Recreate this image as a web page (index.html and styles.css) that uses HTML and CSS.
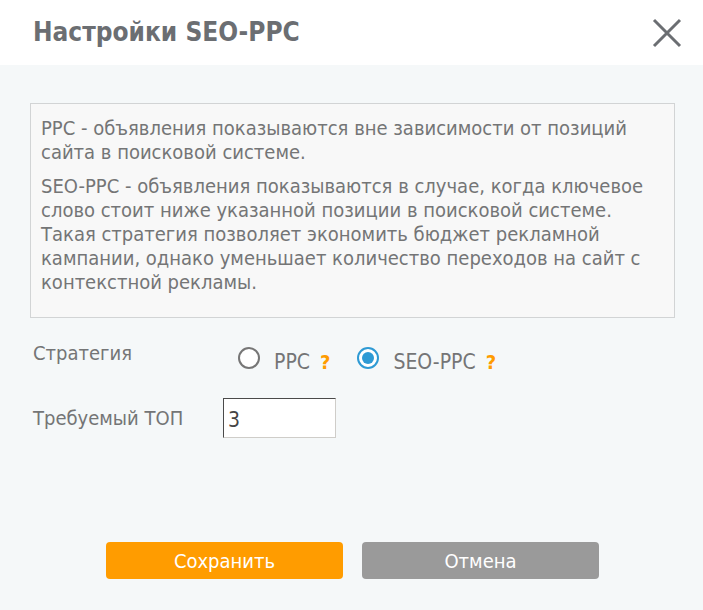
FILE: index.html
```html
<!DOCTYPE html>
<html lang="ru">
<head>
    <meta charset="UTF-8">
    <meta name="viewport" content="width=device-width, initial-scale=1.0">
    <title>Настройки SEO-PPC</title>
    <link rel="stylesheet" href="styles.css">
</head>
<body>
    <div class="dialog">
        <div class="dialog-header">
            <h2 class="dialog-title">Настройки SEO-PPC</h2>
            <button class="close-btn" title="Закрыть">
                <svg width="32" height="32" viewBox="0 0 32 32">
                    <path d="M3 3 L29 29 M29 3 L3 29" stroke="#6b6e72" stroke-width="3" fill="none"/>
                </svg>
            </button>
        </div>
        <div class="dialog-body">
            <div class="hint-box">
                <p>PPC - объявления показываются вне зависимости от позиций сайта в поисковой системе.</p>
                <p>SEO-PPC - объявления показываются в случае, когда ключевое слово стоит ниже указанной позиции в поисковой системе. Такая стратегия позволяет экономить бюджет рекламной кампании, однако уменьшает количество переходов на сайт с контекстной рекламы.</p>
            </div>

            <div class="form-row strategy-row">
                <span class="form-label">Стратегия</span>
                <div class="radio-group">
                    <label class="radio">
                        <input type="radio" name="strategy" value="ppc">
                        <span class="radio-mark"></span>
                        PPC
                    </label>
                    <span class="help">?</span>
                    <label class="radio">
                        <input type="radio" name="strategy" value="seo-ppc" checked>
                        <span class="radio-mark"></span>
                        SEO-PPC
                    </label>
                    <span class="help">?</span>
                </div>
            </div>

            <div class="form-row top-row">
                <label class="form-label" for="top">Требуемый ТОП</label>
                <input class="top-input" type="text" id="top" value="3">
            </div>

            <div class="actions">
                <button class="btn btn-save">Сохранить</button>
                <button class="btn btn-cancel">Отмена</button>
            </div>
        </div>
    </div>
</body>
</html>
```

FILE: styles.css
```css
html, body {
    margin: 0;
    height: 100%;
}
body {
    font-family: "DejaVu Sans Condensed", "DejaVu Sans", sans-serif;
    color: #747576;
    background-color: #f5f8f9;
}
.dialog {
    height: 100%;
    display: flex;
    flex-direction: column;
}
.dialog-header {
    height: 65px;
    background-color: #fff;
    display: flex;
    align-items: center;
    justify-content: space-between;
    padding: 0 20px 0 33px;
}
.dialog-title {
    margin: 0 0 2px;
    font-size: 26px;
    font-weight: bold;
    color: #6b6e72;
}
.close-btn {
    border: none;
    background: none;
    padding: 0;
    width: 32px;
    height: 32px;
    cursor: pointer;
}
.dialog-body {
    flex: 1;
    padding: 38px 28px 0 30px;
}
.hint-box {
    border: 1px solid #d2d4d5;
    background-color: #f8f8f8;
    padding: 12px 10px 13px;
    font-size: 20px;
    line-height: 24px;
}
.hint-box p {
    margin: 0 0 10px;
}
.form-row {
    display: flex;
    padding-left: 3px;
    margin-top: 24px;
}
.strategy-row {
    align-items: flex-start;
    margin-top: 23px;
}
.form-label {
    width: 190px;
    font-size: 20px;
    line-height: 24px;
}
.radio-group {
    display: flex;
    align-items: center;
    margin: 9px 0 0 15px;
    line-height: 24px;
}
.radio {
    display: flex;
    align-items: center;
    font-size: 21px;
    cursor: pointer;
}
.radio input {
    display: none;
}
.radio-mark {
    width: 22px;
    height: 22px;
    box-sizing: border-box;
    border: 2px solid #767676;
    border-radius: 50%;
    background-color: #fff;
    margin: -8px 14px 0 0;
    position: relative;
}
.radio input:checked + .radio-mark {
    border-color: #2e9ad4;
}
.radio input:checked + .radio-mark::after {
    content: "";
    position: absolute;
    left: 3px;
    top: 3px;
    width: 12px;
    height: 12px;
    border-radius: 50%;
    background-color: #2e9ad4;
}
.help {
    color: #ff9c00;
    font-weight: bold;
    font-size: 20px;
    margin: 0 27px 0 10px;
}
.top-row {
    align-items: center;
}
.top-input {
    width: 113px;
    height: 40px;
    box-sizing: border-box;
    border: 1px solid #cfcdc9;
    border-top-color: #4a4a4a;
    border-left-color: #4a4a4a;
    background-color: #fff;
    padding: 4px 4px 0;
    font-family: inherit;
    font-size: 21px;
    color: #454545;
}
.actions {
    display: flex;
    justify-content: center;
    gap: 19px;
    margin-top: 104px;
}
.btn {
    width: 237px;
    height: 37px;
    border: none;
    border-radius: 4px;
    color: #fff;
    font-family: inherit;
    font-size: 20px;
    cursor: pointer;
}
.btn-save {
    background-color: #ff9c00;
}
.btn-cancel {
    background-color: #9a9a9a;
}
```
